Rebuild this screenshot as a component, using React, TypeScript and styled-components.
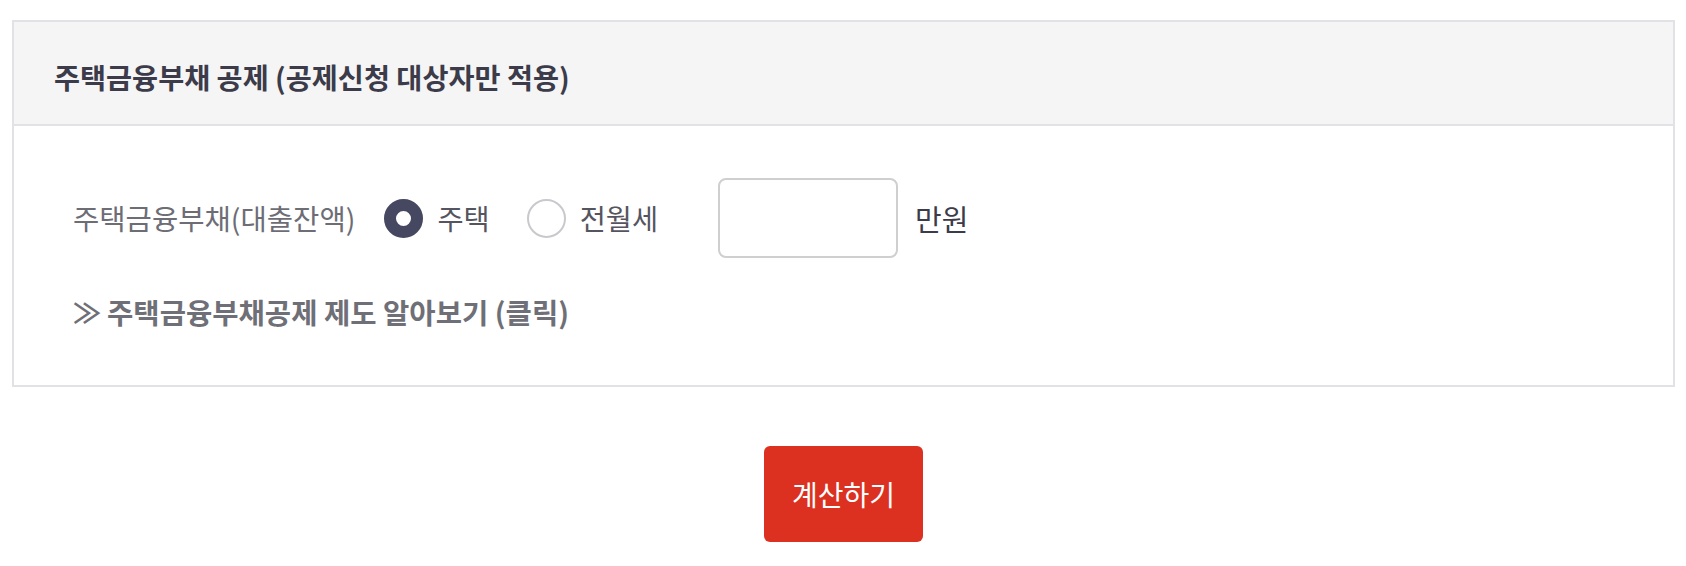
import React, { useState } from "react";
import styled, { createGlobalStyle } from "styled-components";

const GlobalStyle = createGlobalStyle`
  html, body {
    margin: 0;
    padding: 0;
    background: #ffffff;
  }
  body {
    font-family: "Noto Sans CJK KR", "Noto Sans", sans-serif;
  }
  * { box-sizing: border-box; }
`;

const Page = styled.div`
  padding: 20px 11px 0 12px;
  display: flex;
  flex-direction: column;
`;

const Panel = styled.section`
  border: 2px solid #e2e2e6;
  display: flex;
  flex-direction: column;
`;

const PanelHeader = styled.header`
  background: #f5f5f5;
  border-bottom: 2px solid #e2e2e6;
  padding: 36px 40px 28px;
`;

const Title = styled.h2`
  margin: 0;
  font-size: 28.3px;
  line-height: 38px;
  font-weight: 700;
  color: #3b3b4a;
`;

const PanelBody = styled.div`
  padding: 52px 0 54px 59px;
  display: flex;
  flex-direction: column;
  gap: 35px;
`;

const FieldRow = styled.div`
  display: flex;
  align-items: center;
  height: 80px;
`;

const FieldLabel = styled.span`
  font-size: 28.6px;
  line-height: 38px;
  color: #6d6d76;
  margin-right: 29px;
`;

const Option = styled.label<{ $gap: number }>`
  display: flex;
  align-items: center;
  gap: 14px;
  cursor: pointer;
  margin-right: ${(p) => p.$gap}px;
`;

const RadioDot = styled.span<{ $checked: boolean }>`
  width: 39px;
  height: 39px;
  border-radius: 50%;
  background: #ffffff;
  border: ${(p) => (p.$checked ? "12.5px solid #454860" : "2px solid #c9c9cd")};
  flex: none;
`;

const OptionText = styled.span`
  font-size: 28.4px;
  line-height: 38px;
  color: #55555f;
`;

const AmountInput = styled.input`
  width: 180px;
  height: 80px;
  border: 2px solid #cfcfcf;
  border-radius: 8px;
  background: #fff;
  font-size: 24px;
  font-family: inherit;
  padding: 0 12px;
  outline: none;
  margin-right: 17px;
`;

const Unit = styled.span`
  font-size: 29px;
  line-height: 38px;
  color: #3b3b4a;
`;

const InfoLink = styled.a`
  font-size: 28.6px;
  line-height: 38px;
  font-weight: 700;
  color: #6f6f77;
  text-decoration: none;
  cursor: pointer;
  display: flex;
  align-items: center;
  gap: 6px;
`;

const Chevron = styled.span`
  font-weight: 700;
  font-size: 28px;
`;

const Actions = styled.div`
  display: flex;
  justify-content: center;
  padding-top: 59px;
`;

const SubmitButton = styled.button`
  width: 159px;
  height: 96px;
  border: none;
  border-radius: 6px;
  background: #dc3121;
  color: #ffffff;
  font-family: inherit;
  font-size: 28px;
  font-weight: 400;
  cursor: pointer;
`;

export default function App() {
  const [kind, setKind] = useState<"house" | "rent">("house");
  return (
    <>
      <GlobalStyle />
      <Page>
        <Panel>
          <PanelHeader>
            <Title>주택금융부채 공제 (공제신청 대상자만 적용)</Title>
          </PanelHeader>
          <PanelBody>
            <FieldRow>
              <FieldLabel>주택금융부채(대출잔액)</FieldLabel>
              <Option $gap={37} onClick={() => setKind("house")}>
                <RadioDot $checked={kind === "house"} />
                <OptionText>주택</OptionText>
              </Option>
              <Option $gap={60} onClick={() => setKind("rent")}>
                <RadioDot $checked={kind === "rent"} />
                <OptionText>전월세</OptionText>
              </Option>
              <AmountInput type="text" />
              <Unit>만원</Unit>
            </FieldRow>
            <InfoLink>
              <Chevron>≫</Chevron>
              주택금융부채공제 제도 알아보기 (클릭)
            </InfoLink>
          </PanelBody>
        </Panel>
        <Actions>
          <SubmitButton>계산하기</SubmitButton>
        </Actions>
      </Page>
    </>
  );
}
